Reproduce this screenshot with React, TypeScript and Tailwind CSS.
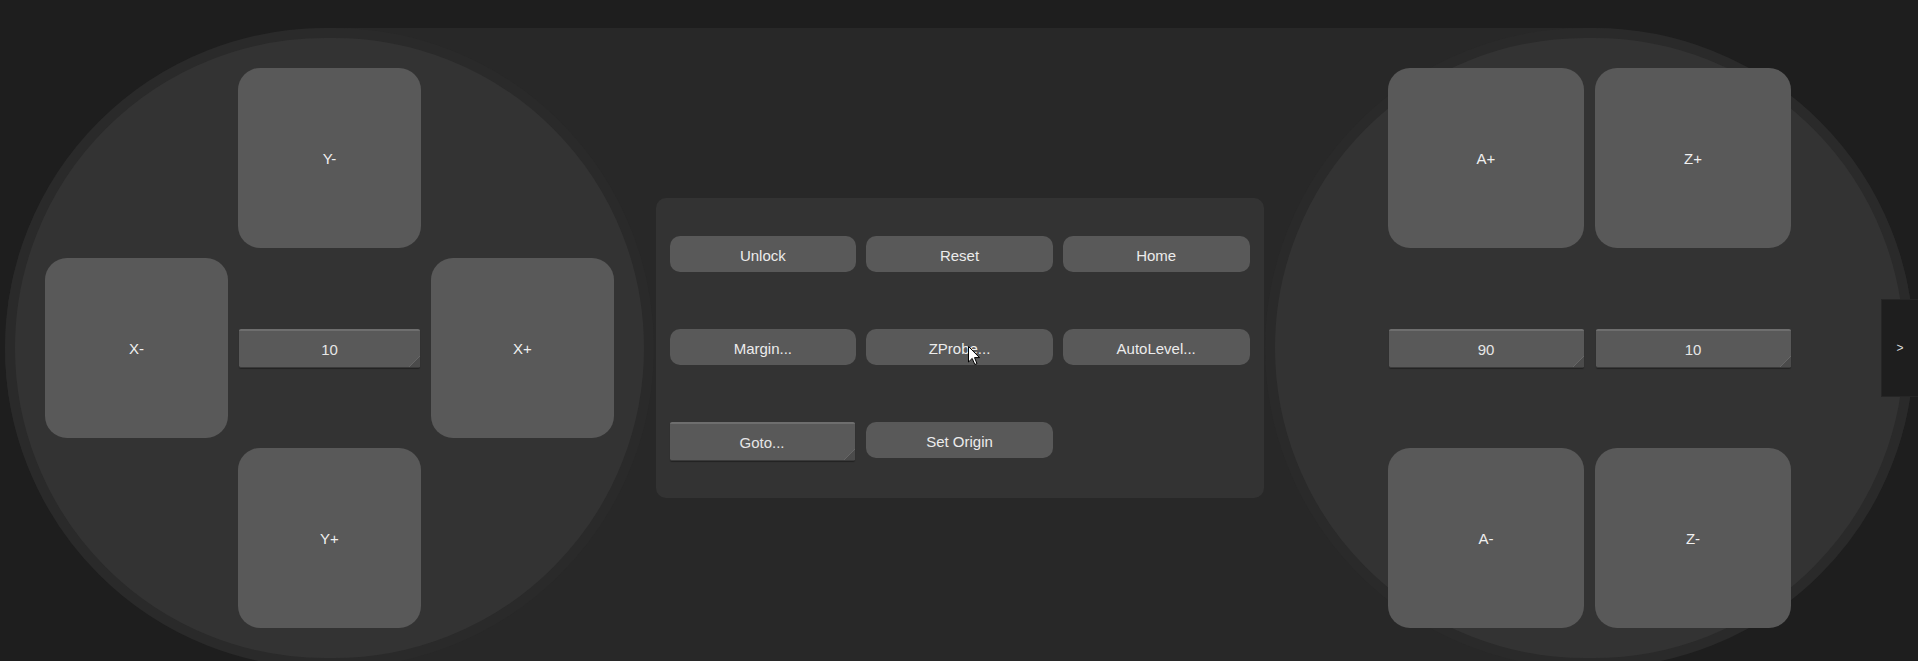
import React from 'react';

const font = { fontFamily: '"Liberation Sans", Arial, sans-serif' };

function PadButton({ label }: { label: string }) {
  return (
    <button className="flex items-center justify-center rounded-[22px] bg-[#595959] pt-[2px] text-[15px] text-[#f0f0f0]">
      {label}
    </button>
  );
}

// textarea-looking step field with resize grip
function StepField({ value, className = '' }: { value: string; className?: string }) {
  return (
    <div
      className={`relative flex h-[39px] items-center justify-center rounded-[2px] border-t-2 border-b border-t-[#6e6e6e] border-b-[#3a3a3a] bg-[#595959] pt-[3px] text-[15px] text-[#e6e6e6] shadow-[0_1px_1px_rgba(0,0,0,0.35)] ${className}`}
    >
      {value}
      <svg className="absolute bottom-0 right-0" width="11" height="11" viewBox="0 0 11 11">
        <polygon points="11,0 11,11 0,11" fill="#4b4b4b" />
        <line x1="11" y1="0" x2="0" y2="11" stroke="#666" strokeWidth="1" />
      </svg>
    </div>
  );
}

function ActionButton({ label }: { label: string }) {
  return (
    <button className="flex h-[36px] items-center justify-center rounded-[10px] bg-[#595959] pt-[5px] text-[15px] text-[#ececec]">
      {label}
    </button>
  );
}

export default function App() {
  return (
    <div className="relative h-[661px] w-[1918px] overflow-hidden bg-[#1e1e1e] pt-[28px]" style={font}>
      <div className="ml-[5px] flex h-[640px] w-[1909px] items-center rounded-[325px/320px] bg-[#282828]">
        {/* XY pad */}
        <div className="flex h-[640px] w-[649px] shrink-0 items-center justify-center rounded-full border-[10px] border-[#2a2a2a] bg-[#333333]">
          <div className="grid grid-cols-[183px_183px_183px] grid-rows-[180px_180px_180px] gap-[10px]">
            <div />
            <PadButton label="Y-" />
            <div />
            <PadButton label="X-" />
            <div className="flex items-center justify-center">
              <StepField value="10" className="w-[181px]" />
            </div>
            <PadButton label="X+" />
            <div />
            <PadButton label="Y+" />
            <div />
          </div>
        </div>

        {/* commands */}
        <div className="flex flex-1 items-center justify-center">
          <div className="flex h-[300px] w-[608px] flex-col justify-center gap-[57px] rounded-[10px] bg-[#333333] px-[14px]">
            <div className="grid grid-cols-3 gap-[10px]">
              <ActionButton label="Unlock" />
              <ActionButton label="Reset" />
              <ActionButton label="Home" />
            </div>
            <div className="grid grid-cols-3 gap-[10px]">
              <ActionButton label="Margin..." />
              <ActionButton label="ZProbe..." />
              <ActionButton label="AutoLevel..." />
            </div>
            <div className="grid grid-cols-3 gap-[10px]">
              <div className="flex items-center">
                <StepField value="Goto..." className="h-[34px] w-[185px]" />
              </div>
              <ActionButton label="Set Origin" />
              <div />
            </div>
          </div>
        </div>

        {/* A / Z pad */}
        <div className="flex h-[640px] w-[649px] shrink-0 items-center justify-center rounded-full border-[10px] border-[#2a2a2a] bg-[#333333]">
          <div className="grid grid-cols-[196px_196px] grid-rows-[180px_180px_180px] gap-x-[11px] gap-y-[10px]">
            <PadButton label="A+" />
            <PadButton label="Z+" />
            <div className="flex items-center justify-center">
              <StepField value="90" className="w-[195px]" />
            </div>
            <div className="flex items-center justify-center">
              <StepField value="10" className="w-[195px]" />
            </div>
            <PadButton label="A-" />
            <PadButton label="Z-" />
          </div>
        </div>
      </div>

      {/* side drawer tab */}
      <button className="absolute right-0 top-[299px] flex h-[98px] w-[37px] items-center justify-center border border-r-0 border-[#262626] bg-[#1e1e1e] text-[12px] text-[#dddddd]">
        &gt;
      </button>

      {/* mouse pointer */}
      <svg className="absolute left-[968px] top-[346px]" width="13" height="20" viewBox="0 0 13 20">
        <path d="M0.5 0.5 L0.5 16 L4.2 12.4 L6.8 18.5 L9 17.6 L6.5 11.6 L11.5 11.6 Z" fill="#ffffff" stroke="#000000" strokeWidth="1" strokeLinejoin="round" />
      </svg>
    </div>
  );
}
